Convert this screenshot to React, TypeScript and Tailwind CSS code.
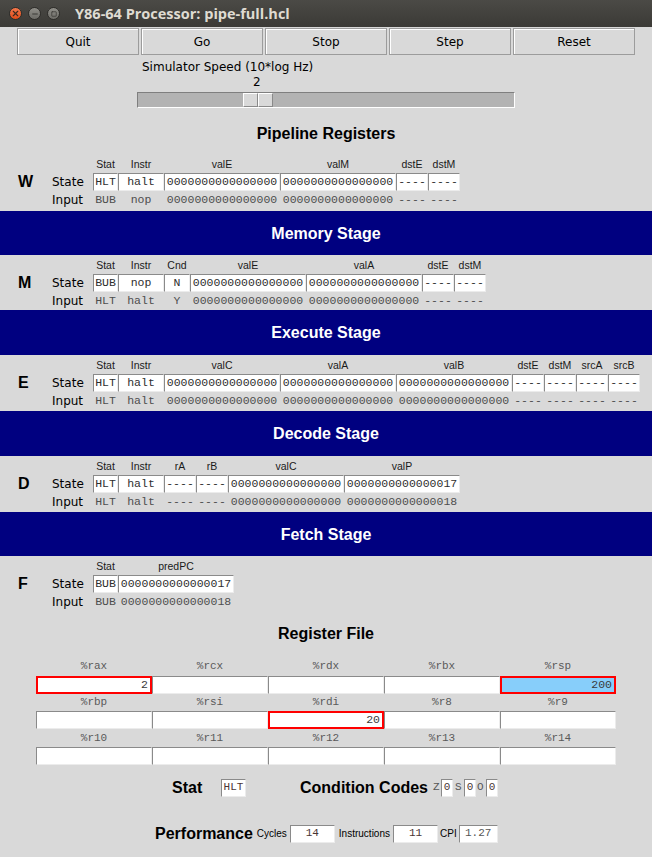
import { X, Minus, Square } from "lucide-react";

const Z16 = "0000000000000000";

const widthClass: Record<number, string> = {
  25: "w-[25px]",
  26: "w-[26px]",
  32: "w-[32px]",
  46: "w-[46px]",
  116: "w-[116px]",
};

type Col = [string, number, string, string];

const stages: { letter: string; banner?: string; h: string; cols: Col[] }[] = [
  {
    letter: "W",
    h: "h-[57px]",
    cols: [
      ["Stat", 25, "HLT", "BUB"],
      ["Instr", 46, "halt", "nop"],
      ["valE", 116, Z16, Z16],
      ["valM", 116, Z16, Z16],
      ["dstE", 32, "----", "----"],
      ["dstM", 32, "----", "----"],
    ],
  },
  {
    letter: "M",
    banner: "Memory Stage",
    h: "h-[55px]",
    cols: [
      ["Stat", 25, "BUB", "HLT"],
      ["Instr", 46, "nop", "halt"],
      ["Cnd", 26, "N", "Y"],
      ["valE", 116, Z16, Z16],
      ["valA", 116, Z16, Z16],
      ["dstE", 32, "----", "----"],
      ["dstM", 32, "----", "----"],
    ],
  },
  {
    letter: "E",
    banner: "Execute Stage",
    h: "h-[56px]",
    cols: [
      ["Stat", 25, "HLT", "HLT"],
      ["Instr", 46, "halt", "halt"],
      ["valC", 116, Z16, Z16],
      ["valA", 116, Z16, Z16],
      ["valB", 116, Z16, Z16],
      ["dstE", 32, "----", "----"],
      ["dstM", 32, "----", "----"],
      ["srcA", 32, "----", "----"],
      ["srcB", 32, "----", "----"],
    ],
  },
  {
    letter: "D",
    banner: "Decode Stage",
    h: "h-[56px]",
    cols: [
      ["Stat", 25, "HLT", "HLT"],
      ["Instr", 46, "halt", "halt"],
      ["rA", 32, "----", "----"],
      ["rB", 32, "----", "----"],
      ["valC", 116, Z16, Z16],
      ["valP", 116, "0000000000000017", "0000000000000018"],
    ],
  },
  {
    letter: "F",
    banner: "Fetch Stage",
    h: "h-[55px]",
    cols: [
      ["Stat", 25, "BUB", "BUB"],
      ["predPC", 116, "0000000000000017", "0000000000000018"],
    ],
  },
];

const bannerH: Record<string, string> = {
  "Memory Stage": "h-[44px]",
  "Execute Stage": "h-[45px]",
  "Decode Stage": "h-[45px]",
  "Fetch Stage": "h-[44px]",
};

const regs: [string, string, string][][] = [
  [
    ["%rax", "2", "red"],
    ["%rcx", "", ""],
    ["%rdx", "", ""],
    ["%rbx", "", ""],
    ["%rsp", "200", "blue"],
  ],
  [
    ["%rbp", "", ""],
    ["%rsi", "", ""],
    ["%rdi", "20", "red"],
    ["%r8", "", ""],
    ["%r9", "", ""],
  ],
  [
    ["%r10", "", ""],
    ["%r11", "", ""],
    ["%r12", "", ""],
    ["%r13", "", ""],
    ["%r14", "", ""],
  ],
];

const entry =
  "bg-white border border-t-[#8a8a8a] border-l-[#8a8a8a] border-r-[#ececec] border-b-[#ececec]";

function Stage({ letter, cols, h }: { letter: string; cols: Col[]; h: string }) {
  return (
    <div className={`${h} pt-[3px] font-['Liberation_Mono',monospace]`}>
      <div className="flex h-[16px] pl-[93px] items-center font-['Liberation_Sans',sans-serif] text-[10.5px] text-[#1a1a1a]">
        {cols.map(([name, w]) => (
          <div key={name} className={`${widthClass[w]} text-center`}>
            {name}
          </div>
        ))}
      </div>
      <div className="flex h-[18px] items-center">
        <div className="w-[52px] pl-[18px] font-['Liberation_Sans',sans-serif] font-bold text-[16px] text-black">
          {letter}
        </div>
        <div className="w-[41px] font-['DejaVu_Sans',sans-serif] text-[12px] text-black">State</div>
        {cols.map(([name, w, s]) => (
          <div
            key={name}
            className={`${widthClass[w]} ${entry} h-[18px] flex items-center justify-center text-[11.5px] text-[#2e2e2e]`}
          >
            {s}
          </div>
        ))}
      </div>
      <div className="flex h-[18px] items-center">
        <div className="w-[52px]" />
        <div className="w-[41px] font-['DejaVu_Sans',sans-serif] text-[12px] text-black">Input</div>
        {cols.map(([name, w, , i]) => (
          <div
            key={name}
            className={`${widthClass[w]} h-[18px] flex items-center justify-center text-[11.5px] text-[#4e4e4e]`}
          >
            {i}
          </div>
        ))}
      </div>
    </div>
  );
}

function Box({ w, children, cls = "" }: { w: string; children: React.ReactNode; cls?: string }) {
  return (
    <div
      className={`${w} ${entry} h-[18px] flex items-center justify-center font-['Liberation_Mono',monospace] text-[11px] text-[#4a3535] ${cls}`}
    >
      {children}
    </div>
  );
}

export default function App() {
  return (
    <div className="w-[652px] h-[857px] overflow-hidden bg-[#d9d9d9] font-['DejaVu_Sans',sans-serif] text-black">
      {/* Title bar */}
      <div className="h-[27px] flex items-center bg-gradient-to-b from-[#4b4a46] to-[#3b3a36] pl-[9px]">
        <div className="w-[13px] h-[13px] rounded-full bg-gradient-to-b from-[#f4774a] to-[#df4b16] flex items-center justify-center border border-[#2e2d2a]">
          <X size={9} strokeWidth={3} color="#3b2a20" />
        </div>
        <div className="ml-[6px] w-[13px] h-[13px] rounded-full bg-gradient-to-b from-[#8f8e88] to-[#6d6c67] flex items-center justify-center border border-[#2e2d2a]">
          <Minus size={8} strokeWidth={3} color="#3b3a36" />
        </div>
        <div className="ml-[6px] w-[13px] h-[13px] rounded-full bg-gradient-to-b from-[#8f8e88] to-[#6d6c67] flex items-center justify-center border border-[#2e2d2a]">
          <Square size={6} strokeWidth={3} color="#3b3a36" />
        </div>
        <div className="ml-[15px] font-['Open_Sans',sans-serif] font-bold text-[14.5px] text-[#dfdbd2]">
          Y86-64 Processor: pipe-full.hcl
        </div>
      </div>

      {/* Buttons */}
      <div className="mt-[1px] flex gap-[2px] pl-[17px] h-[27px]">
        {["Quit", "Go", "Stop", "Step", "Reset"].map((b) => (
          <button
            key={b}
            className="w-[122px] h-[27px] border border-[#9c9c9c] shadow-[inset_1px_1px_0_#ffffff] bg-[#d9d9d9] text-[12px] flex items-center justify-center"
          >
            {b}
          </button>
        ))}
      </div>

      {/* Speed slider */}
      <div className="mt-[4px] h-[16px] pl-[142px] text-[12px] leading-[16px]">Simulator Speed (10*log Hz)</div>
      <div className="h-[15px] pl-[253px] text-[12px] leading-[15px]">2</div>
      <div className="mt-[2px] ml-[137px] w-[378px] h-[16px] bg-[#b3b3b3] border border-t-[#7f7f7f] border-l-[#7f7f7f] border-r-white border-b-white flex pl-[105px]">
        <div className="w-[15px] h-full bg-[#d9d9d9] border border-t-white border-l-white border-r-[#8a8a8a] border-b-[#8a8a8a]" />
        <div className="w-[15px] h-full bg-[#d9d9d9] border border-t-white border-l-white border-r-[#8a8a8a] border-b-[#8a8a8a]" />
      </div>

      {/* Pipeline Registers */}
      <div className="h-[46px] pt-[16px] text-center font-['Liberation_Sans',sans-serif] font-bold text-[16px] leading-[20px]">
        Pipeline Registers
      </div>

      {stages.map((s) => (
        <div key={s.letter}>
          {s.banner && (
            <div
              className={`${bannerH[s.banner]} bg-[#000080] flex items-center justify-center pt-[1px] font-['Liberation_Sans',sans-serif] font-bold text-[16px] text-white`}
            >
              {s.banner}
            </div>
          )}
          <Stage letter={s.letter} cols={s.cols} h={s.h} />
        </div>
      ))}

      {/* Register File */}
      <div className="h-[44px] flex items-center justify-center pt-[1px] font-['Liberation_Sans',sans-serif] font-bold text-[16px]">
        Register File
      </div>
      <div className="pl-[36px] h-[110px] font-['Liberation_Mono',monospace]">
        {regs.map((row, ri) => (
          <div key={ri}>
            <div
              className={`flex items-center ${ri === 0 ? "h-[21px] pt-[1px]" : ri === 1 ? "h-[17px]" : "h-[18px]"} text-[11px] text-[#5a5a5a]`}
            >
              {row.map(([n]) => (
                <div key={n} className="w-[116px] text-center">
                  {n}
                </div>
              ))}
            </div>
            <div className="flex">
              {row.map(([n, v, k]) => (
                <div
                  key={n}
                  className={`w-[116px] h-[18px] flex items-center justify-end pr-[2px] text-[11.5px] text-[#3a3a3a] ${
                    k === "red"
                      ? "bg-white border-2 border-[#ff0000]"
                      : k === "blue"
                        ? "bg-[#87cefa] border-2 border-[#ff0000]"
                        : entry
                  }`}
                >
                  {v}
                </div>
              ))}
            </div>
          </div>
        ))}
      </div>

      {/* Stat & condition codes */}
      <div className="h-[45px] flex items-center pl-[172px] font-['Liberation_Sans',sans-serif]">
        <span className="font-bold text-[16px] w-[49px]">Stat</span>
        <Box w="w-[25px]">HLT</Box>
        <span className="ml-[54px] font-bold text-[16px]">Condition Codes</span>
        <span className="ml-[5px] w-[8px] font-['Liberation_Mono',monospace] text-[11px] text-[#555]">Z</span>
        <Box w="w-[12px]">0</Box>
        <span className="ml-[2px] w-[9px] font-['Liberation_Mono',monospace] text-[11px] text-[#555]">S</span>
        <Box w="w-[12px]">0</Box>
        <span className="ml-[1px] w-[9px] font-['Liberation_Mono',monospace] text-[11px] text-[#555]">O</span>
        <Box w="w-[12px]">0</Box>
      </div>

      {/* Performance */}
      <div className="h-[47px] flex items-center pl-[155px] font-['Liberation_Sans',sans-serif]">
        <span className="font-bold text-[16px]">Performance</span>
        <span className="ml-[4px] text-[10px]">Cycles</span>
        <Box w="ml-[3px] w-[45px]">14</Box>
        <span className="ml-[4px] text-[10px]">Instructions</span>
        <Box w="ml-[3px] w-[45px]">11</Box>
        <span className="ml-[2px] text-[10px]">CPI</span>
        <Box w="ml-[2px] w-[39px]" cls="text-[#555]">1.27</Box>
      </div>
    </div>
  );
}
